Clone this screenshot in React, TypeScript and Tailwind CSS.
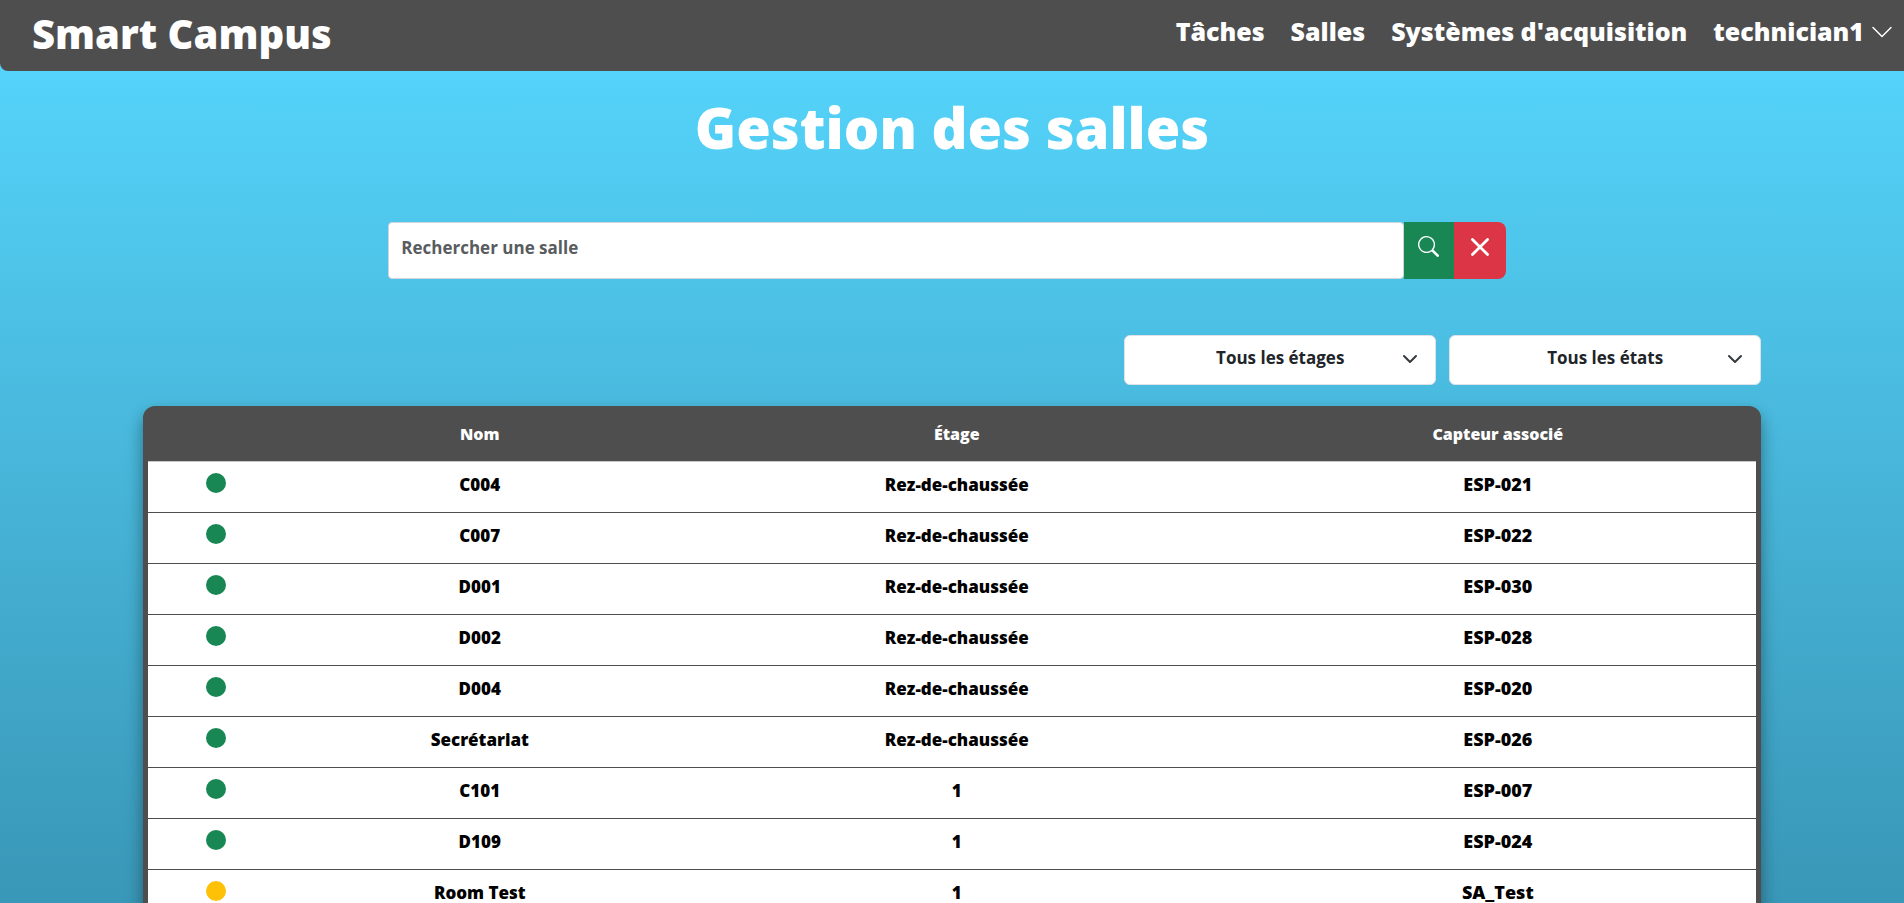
import React, { useState } from "react";
import { BsChevronDown, BsSearch, BsXLg } from "react-icons/bs";

const links = ["Tâches", "Salles", "Systèmes d'acquisition"];

const rooms = [
    { name: "C004", floor: "Rez-de-chaussée", sensor: "ESP-021", ok: true },
    { name: "C007", floor: "Rez-de-chaussée", sensor: "ESP-022", ok: true },
    { name: "D001", floor: "Rez-de-chaussée", sensor: "ESP-030", ok: true },
    { name: "D002", floor: "Rez-de-chaussée", sensor: "ESP-028", ok: true },
    { name: "D004", floor: "Rez-de-chaussée", sensor: "ESP-020", ok: true },
    { name: "Secrétariat", floor: "Rez-de-chaussée", sensor: "ESP-026", ok: true },
    { name: "C101", floor: "1", sensor: "ESP-007", ok: true },
    { name: "D109", floor: "1", sensor: "ESP-024", ok: true },
    { name: "Room Test", floor: "1", sensor: "SA_Test", ok: false },
];

function FilterSelect({ label, children }: { label: string; children: React.ReactNode }) {
    return (
        <div className="relative w-[312px]">
            <select
                aria-label={label}
                className="h-[50px] w-full appearance-none rounded-md border border-[#dee2e6] bg-white px-9 pb-1 text-center text-[17px] font-bold text-[#212529]"
            >
                {children}
            </select>
            <svg
                viewBox="0 0 16 16"
                className="pointer-events-none absolute top-4 right-[18px] h-4 w-4"
                fill="none"
                stroke="#343a40"
                strokeWidth="2"
                strokeLinecap="round"
                strokeLinejoin="round"
            >
                <path d="m2 5 6 6 6-6" />
            </svg>
        </div>
    );
}

export default function App() {
    const [search, setSearch] = useState("");

    return (
        <div className="min-h-screen bg-linear-to-b from-[#57d8ff] to-[#3894b4] font-['Open_Sans','Noto_Sans',sans-serif]">
            <header className="flex h-[71px] items-center justify-between rounded-bl-lg bg-[#4e4e4e] pr-2.5 pl-8 text-white">
                <a href="#" className="pb-1 text-[40px] leading-none font-extrabold">
                    Smart Campus
                </a>
                <nav className="flex items-center gap-[26px] pb-2 text-[25px] font-extrabold">
                    {links.map((link) => (
                        <a key={link} href="#">
                            {link}
                        </a>
                    ))}
                    <button type="button" className="flex items-center gap-1.5">
                        technician1
                        <BsChevronDown size={24} />
                    </button>
                </nav>
            </header>

            <main className="flex flex-col items-center pb-4">
                <h1 className="mt-[18px] text-[56px] leading-[76px] font-extrabold text-white">
                    Gestion des salles
                </h1>

                <div className="mt-[57px] flex w-full justify-center pr-2.5">
                    <form className="flex h-[57px] w-[59%]" onSubmit={(e) => e.preventDefault()}>
                        <input
                            type="text"
                            aria-label="Rechercher une salle"
                            placeholder="Rechercher une salle"
                            value={search}
                            onChange={(e) => setSearch(e.target.value)}
                            className="min-w-0 flex-1 rounded border border-[#ced4da] bg-white px-3 pb-1.5 text-[17px] font-bold text-[#212529] placeholder:text-[#595c5f]"
                        />
                        <button
                            type="submit"
                            aria-label="Rechercher"
                            className="flex w-[50px] items-center justify-center bg-[#198754] pb-2 text-white"
                        >
                            <BsSearch size={21} />
                        </button>
                        <button
                            type="button"
                            aria-label="Effacer"
                            onClick={() => setSearch("")}
                            className="flex w-[52px] items-center justify-center rounded-r-lg bg-[#dc3545] pb-2 text-white"
                        >
                            <BsXLg size={22} strokeWidth={1} />
                        </button>
                    </form>
                </div>

                <div className="mt-14 flex w-[85%] justify-end gap-[13px]">
                    <FilterSelect label="Étage">
                        <option>Tous les étages</option>
                        <option>Rez-de-chaussée</option>
                        <option>1</option>
                    </FilterSelect>
                    <FilterSelect label="État">
                        <option>Tous les états</option>
                    </FilterSelect>
                </div>

                <div className="mt-[21px] w-[85%] overflow-hidden rounded-xl border-[5px] border-[#4e4e4e] bg-[#4e4e4e] shadow-[0_8px_16px_rgba(0,0,0,0.4)]">
                    <table className="w-full table-fixed border-collapse text-center text-[17px]">
                        <colgroup>
                            <col className="w-[136px]" />
                            <col className="w-[392px]" />
                            <col className="w-[562px]" />
                            <col className="w-[520px]" />
                        </colgroup>
                        <thead className="text-base text-white">
                            <tr className="h-[50px] border-b border-[#c8c8c8]">
                                <th aria-label="État"></th>
                                <th className="pb-1 font-extrabold">Nom</th>
                                <th className="pb-1 font-extrabold">Étage</th>
                                <th className="pb-1 font-extrabold">Capteur associé</th>
                            </tr>
                        </thead>
                        <tbody className="bg-white font-extrabold text-black">
                            {rooms.map((room) => (
                                <tr key={room.name} className="h-[51px] border-b border-[#4e4e4e]">
                                    <td className="pb-2">
                                        <span
                                            className={
                                                room.ok
                                                    ? "mx-auto block size-5 rounded-full bg-[#198754]"
                                                    : "mx-auto block size-5 rounded-full bg-[#ffc107]"
                                            }
                                        />
                                    </td>
                                    <td className="pb-1">{room.name}</td>
                                    <td className="pb-1">{room.floor}</td>
                                    <td className="pb-1.5 text-lg">{room.sensor}</td>
                                </tr>
                            ))}
                        </tbody>
                    </table>
                </div>
            </main>
        </div>
    );
}
